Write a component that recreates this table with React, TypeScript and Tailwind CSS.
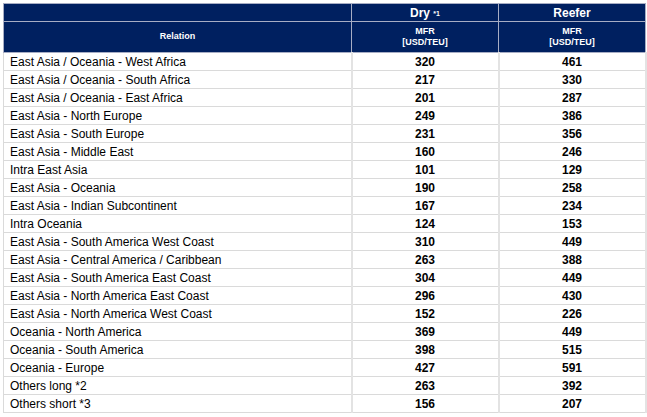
const rows: [string, number, number][] = [
  ["East Asia / Oceania - West Africa", 320, 461],
  ["East Asia / Oceania - South Africa", 217, 330],
  ["East Asia / Oceania - East Africa", 201, 287],
  ["East Asia - North Europe", 249, 386],
  ["East Asia - South Europe", 231, 356],
  ["East Asia - Middle East", 160, 246],
  ["Intra East Asia", 101, 129],
  ["East Asia - Oceania", 190, 258],
  ["East Asia - Indian Subcontinent", 167, 234],
  ["Intra Oceania", 124, 153],
  ["East Asia - South America West Coast", 310, 449],
  ["East Asia - Central America / Caribbean", 263, 388],
  ["East Asia - South America East Coast", 304, 449],
  ["East Asia - North America East Coast", 296, 430],
  ["East Asia - North America West Coast", 152, 226],
  ["Oceania - North America", 369, 449],
  ["Oceania - South America", 398, 515],
  ["Oceania - Europe", 427, 591],
  ["Others long *2", 263, 392],
  ["Others short *3", 156, 207],
];

export default function App() {
  return (
    <div className="w-[647px] h-[417px] bg-white p-[3px] font-['Liberation_Sans',Arial,sans-serif] text-black">
      <table className="w-[642px] table-fixed border-collapse">
        <colgroup>
          <col className="w-[348px]" />
          <col className="w-[147px]" />
          <col className="w-[147px]" />
        </colgroup>
        <thead>
          <tr className="h-[18px] bg-[#002060] text-white">
            <th className="border border-[#a7adc4] p-0"></th>
            <th className="border border-[#a7adc4] p-0 text-[12px] font-bold leading-none">
              Dry <span className="text-[7px] align-middle">*1</span>
            </th>
            <th className="border border-[#a7adc4] p-0 text-[12px] font-bold leading-none">Reefer</th>
          </tr>
          <tr className="h-[31px] bg-[#002060] text-white">
            <th className="border border-[#a7adc4] p-0 text-[9px] font-bold">Relation</th>
            <th className="border border-[#a7adc4] p-0 text-[9px] font-bold leading-[11px]">
              MFR
              <br />
              [USD/TEU]
            </th>
            <th className="border border-[#a7adc4] p-0 text-[9px] font-bold leading-[11px]">
              MFR
              <br />
              [USD/TEU]
            </th>
          </tr>
        </thead>
        <tbody>
          {rows.map(([name, dry, reefer]) => (
            <tr key={name} className="h-[18px] text-[12px] leading-none">
              <td className="border border-[#dadada] pl-[6px] py-0 whitespace-nowrap">{name}</td>
              <td className="border border-[#dadada] border-x-2 border-x-[#e3e3e3] p-0 text-center font-bold">{dry}</td>
              <td className="border border-[#dadada] border-x-2 border-x-[#e3e3e3] p-0 text-center font-bold">{reefer}</td>
            </tr>
          ))}
        </tbody>
      </table>
    </div>
  );
}
